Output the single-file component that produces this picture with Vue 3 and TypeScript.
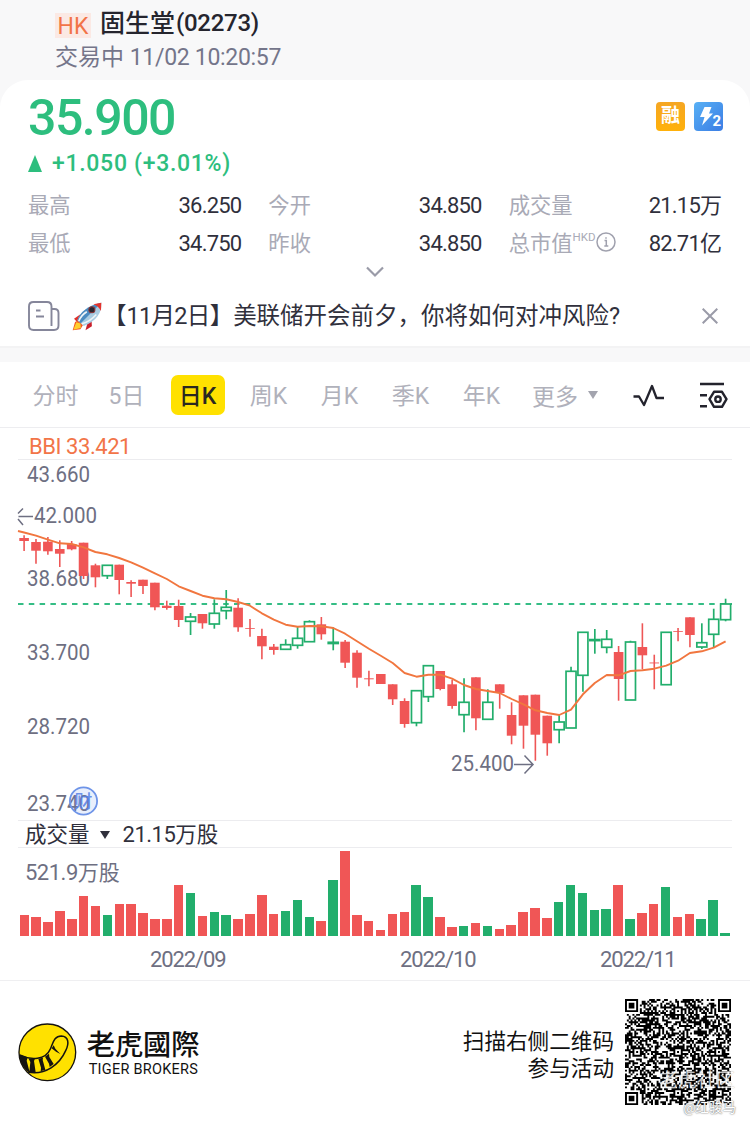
<template>
  <div class="page">
    <header class="head">
      <div class="head-title">
        <span class="market">HK</span>
        <span class="name">固生堂<span class="code">(02273)</span></span>
      </div>
      <div class="head-status">交易中 <span class="time">11/02 10:20:57</span></div>
    </header>

    <section class="quote">
      <div class="quote-top">
        <div class="price">35.900</div>
        <div class="badges">
          <span class="badge badge-margin">融</span>
          <span class="badge badge-level">
            <svg viewBox="0 0 29 29">
              <path d="M10.500 5h7l-2.500 6.500h4L8 23.500l2.500-8.500H6z" fill="#fff" />
            </svg>
            <b>2</b>
          </span>
        </div>
      </div>
      <div class="change">
        <i class="up"></i>
        <span>+1.050 (+3.01%)</span>
      </div>
      <div class="stats">
        <div v-for="s in stats" :key="s.label" class="stat">
          <span class="stat-label">{{ s.label }}<sup v-if="s.info">HKD</sup>
            <svg v-if="s.info" class="info" viewBox="0 0 20 20" fill="none" stroke="#a0a1ae" stroke-width="1.500">
              <circle cx="10" cy="10" r="9" />
              <path d="M8.500 8.500H10.300V14M8.300 14h4M10 5.200v1.500" />
            </svg>
          </span>
          <span class="stat-value">{{ s.value }}<em v-if="s.unit">{{ s.unit }}</em></span>
        </div>
      </div>
      <svg class="more" viewBox="0 0 18 12" fill="none" stroke="#9a9ba8" stroke-width="2.200">
        <path d="M1 1.500l8 8 8-8" />
      </svg>
      <div class="news">
        <svg class="news-icon" viewBox="0 0 32 30" fill="none" stroke="#85869a" stroke-width="1.900">
          <path d="M23.500 25V5.500Q23.500 1 19 1H5.500Q1 1 1 5.500v19Q1 29 5.500 29H26q4.500 0 4.500-4.500V12q0-4-4-4h-3M23.500 8v15.500" />
          <path d="M8 9.500h4.500M8 15.500h8" />
        </svg>
        <svg class="rocket" viewBox="0 0 92 86">
          <path d="M6 50l18-13 20 5-26 20z" fill="#e0302b" />
          <path d="M40 84l6-22 12-10 1 20z" fill="#c91f2b" />
          <path d="M2 84l7-25 14-6 11 13-9 15z" fill="#f25a24" />
          <path d="M4 82l9-22 12 4 1 13z" fill="#ffcf2e" />
          <path d="M16 54Q29 15 87 2q3 47-52 69z" fill="#a9cce2" />
          <path d="M16 54Q29 15 87 2L26 63z" fill="#4a8bc0" />
          <path d="M63 7l24-5-1 25Q79 12 63 7z" fill="#e3342d" />
          <circle cx="59" cy="23" r="9" fill="#26262e" stroke="#8c3436" stroke-width="3" />
          <path d="M20 57q8-19 24-28M29 65q26-8 43-28" stroke="#eef4f7" stroke-width="5" fill="none" />
        </svg>
        <span class="news-text">【<span class="date">11月2日</span>】<span class="news-main">美联储开会前夕，你将如何对冲风险?</span></span>
        <svg class="close" viewBox="0 0 16 16" fill="none" stroke="#9a9ba8" stroke-width="2">
          <path d="M.7.700l14.600 14.600M15.300.700L.7 15.300" />
        </svg>
      </div>
    </section>

    <nav class="tabs">
      <div v-for="t in tabs" :key="t" class="tab" :class="{ active: t === current }" @click="current = t">
        <span>{{ t }}</span>
      </div>
      <div class="tab-more">更多<i></i></div>
      <svg class="wave" viewBox="0 0 32 24" fill="none" stroke="#23232d" stroke-width="2.300" stroke-linejoin="round">
        <path d="M.5 12.500H6l5 8.500 8-19 4.500 12H31" />
      </svg>
      <svg class="setting" viewBox="0 0 30 28" fill="none" stroke="#23232d" stroke-width="2.400">
        <path d="M1 2h24M1 13.300h7M1 24.300h7" />
        <path d="M15 9.800h8l4.500 7.400-4.500 7.600h-8l-4.500-7.600z" stroke-linejoin="round" />
        <circle cx="19" cy="17.200" r="2.700" />
      </svg>
    </nav>

    <div class="bbi">BBI 33.421</div>

    <svg class="chart" width="750" height="361" viewBox="0 459 750 361">
      <line x1="18" x2="732" y1="459.500" y2="459.500" class="grid" />
      <g class="axis">
        <text v-for="l in priceLabels" :key="l.text" x="27" :y="l.y" textLength="63" lengthAdjust="spacingAndGlyphs">{{ l.text }}</text>
        <text x="34" y="522.500" textLength="63" lengthAdjust="spacingAndGlyphs">42.000</text>
        <text x="451" y="771" textLength="63" lengthAdjust="spacingAndGlyphs">25.400</text>
      </g>
      <path d="M33 516.500H18.500M23 508.500l-5 5M18 519l5 6" class="arrow" />
      <path d="M514 764.500h19M524.500 755.500l8.500 9-8.500 9" class="arrow" />
      <line x1="18" x2="732" y1="603.900" y2="603.900" class="last-price" />
      <g v-for="c in candles" :key="c.x" :class="c.up ? 'rise' : 'fall'">
        <template v-if="c.up">
          <line :x1="c.x" :x2="c.x" :y1="c.high" :y2="c.top" />
          <line :x1="c.x" :x2="c.x" :y1="c.bottom" :y2="c.low" />
          <rect :x="c.x - 5" :y="c.top" width="10" :height="c.bottom - c.top" />
        </template>
        <template v-else>
          <line :x1="c.x" :x2="c.x" :y1="c.high" :y2="c.low" />
          <rect :x="c.x - 4.800" :y="c.top" width="9.600" :height="c.bottom - c.top" />
        </template>
      </g>
      <polyline :points="bbiLine" class="bbi-line" />
      <g class="event">
        <circle cx="83.500" cy="801" r="13.600" />
        <text x="83.500" y="808" text-anchor="middle">财</text>
      </g>
    </svg>

    <div class="vol-head">
      <span>成交量</span>
      <i></i>
      <span><b>21.15</b>万股</span>
    </div>
    <div class="vol">
      <div class="vol-max"><b>521.9</b>万股</div>
      <div class="bars">
        <i v-for="c in candles" :key="c.x" :class="c.up ? 'bar-up' : 'bar-down'" :style="{ height: c.volume + 'px' }"></i>
      </div>
    </div>
    <div class="months">
      <span>2022/09</span>
      <span>2022/10</span>
      <span>2022/11</span>
    </div>

    <footer class="foot">
      <svg class="logo" viewBox="53 67 176 176">
        <circle cx="141" cy="155" r="85" fill="#ffe100" stroke="#151310" stroke-width="4" />
        <path d="M58 163C92 180 136 178 150 145C159 124 162 106 183 106C205 107 207 128 196 150C178 191 135 225 82 214" fill="none" stroke="#151310" stroke-width="4.500" />
        <path d="M58 162l24 8-3 10 9 35-8-3Q62 192 57 171zM84 173l20 1-3 7 5 34-19-1 3-30zM114 174l14-3-1 7 8 29-14 5 1-11zM134 168l12-9 1 10 13 21-12 9-2-10zM154 143l6-9 5 10 15 16-13-7z" fill="#151310" />
      </svg>
      <div class="brand">
        <div class="brand-cn">老虎國際</div>
        <div class="brand-en">TIGER BROKERS</div>
      </div>
      <div class="tip">扫描右侧二维码<br>参与活动</div>
      <div class="qr">
        <svg viewBox="0 0 57 57">
          <path :d="qrPath" fill="#000" />
        </svg>
        <span class="mark-community">老虎社区</span>
        <span class="mark-user">@红骏马</span>
      </div>
    </footer>
  </div>
</template>

<script setup lang="ts">
import { ref } from 'vue'

interface Stat {
  label: string
  value: string
  unit?: string
  info?: boolean
}

interface Candle {
  x: number
  up: boolean
  top: number
  bottom: number
  high: number
  low: number
  volume: number
}

const stats: Stat[] = [
  { label: '最高', value: '36.250' },
  { label: '今开', value: '34.850' },
  { label: '成交量', value: '21.15', unit: '万' },
  { label: '最低', value: '34.750' },
  { label: '昨收', value: '34.850' },
  { label: '总市值', value: '82.71', unit: '亿', info: true },
]

const tabs = ['分时', '5日', '日K', '周K', '月K', '季K', '年K']
const current = ref('日K')

const priceLabels = [
  { text: '43.660', y: 482 },
  { text: '38.680', y: 586 },
  { text: '33.700', y: 660 },
  { text: '28.720', y: 734 },
  { text: '23.740', y: 811 },
]

// [up, top, bottom, high, low, volume]
const raw: number[][] = [
  [0, 538, 541, 535.3, 551, 20.7],
  [0, 542, 550.7, 539, 563.7, 19.3],
  [0, 541.7, 551.3, 537, 554.7, 14.3],
  [0, 549, 553.7, 540.3, 567, 24.7],
  [0, 544, 549.3, 541, 550.3, 17],
  [0, 542.7, 576, 542.7, 579, 40],
  [0, 565.3, 577.3, 563.7, 587.3, 30],
  [1, 565.3, 575.7, 565.3, 579, 20.7],
  [0, 564.7, 580, 564.7, 594.3, 32.3],
  [0, 582, 583.7, 580.3, 597, 32.3],
  [0, 579.7, 586, 579.7, 594, 23.3],
  [0, 582.7, 607.3, 582.7, 610.3, 17],
  [0, 605.7, 608, 600.7, 609.7, 17],
  [0, 606, 620, 599.7, 627, 50.7],
  [1, 617, 621.3, 613, 635, 42.7],
  [0, 614, 623.3, 614, 628.7, 20.3],
  [1, 613.3, 624, 599.3, 628.7, 23.7],
  [1, 607.3, 610.7, 590, 619.3, 20.7],
  [0, 607.7, 627.3, 598.3, 631.7, 17.3],
  [0, 628, 628.8, 619, 636.7, 22],
  [0, 636, 646.3, 628.7, 659.3, 41.3],
  [0, 646.7, 650, 644, 654.7, 22.3],
  [1, 644.7, 649.3, 639.3, 650, 24.7],
  [1, 638.3, 645.3, 626.7, 648.7, 36.3],
  [1, 621.7, 641.7, 620.3, 641.7, 19],
  [0, 624.3, 634.3, 617, 639.7, 15],
  [1, 642.3, 643.5, 627.3, 650.3, 55.7],
  [0, 641.7, 662.7, 640, 668, 84.7],
  [0, 652.7, 677.7, 650.3, 687.7, 21],
  [0, 678.3, 679.3, 670.7, 686.3, 14.7],
  [0, 674, 684, 674, 684, 6.5],
  [0, 684.3, 699.3, 684.3, 705, 21.7],
  [0, 701, 724, 698.3, 727.7, 24.3],
  [1, 690.7, 722.7, 690.7, 726.3, 50.7],
  [1, 665.7, 696.7, 665.7, 702, 39],
  [0, 671, 689, 671, 690.3, 19.3],
  [0, 684.3, 706, 679.7, 708.7, 9.3],
  [1, 702.3, 714.7, 678.3, 732.3, 10.3],
  [0, 677.3, 718.3, 677.3, 730.3, 13.3],
  [1, 702.3, 719.3, 689.3, 719.3, 10],
  [0, 684.3, 693, 684.3, 708.7, 6.7],
  [0, 715, 735.7, 702.3, 744.3, 11.3],
  [0, 695.3, 725.7, 695.3, 748.7, 24.3],
  [0, 694.7, 734.7, 694.7, 760.7, 27.7],
  [0, 715.7, 743.3, 715.7, 755.7, 18.3],
  [1, 722, 729.7, 714.7, 743.3, 33.7],
  [1, 671.3, 728, 666.7, 728, 51.3],
  [1, 632.3, 675.3, 632.3, 691.7, 43.3],
  [1, 639.6, 640.6, 629, 653.7, 25.7],
  [1, 639.3, 647.3, 630, 653.3, 27],
  [0, 652, 679, 646, 700.7, 51.3],
  [1, 642, 700, 640.7, 700, 17.3],
  [0, 647, 655.3, 623.3, 669.3, 22.7],
  [0, 662.5, 663.4, 654.7, 689.3, 31.7],
  [1, 632.3, 684.7, 632.3, 684.7, 49],
  [0, 631, 631.8, 628, 641.3, 19.3],
  [0, 617.3, 635, 617.3, 647.3, 22],
  [1, 642.7, 647, 623.3, 649, 17.3],
  [1, 619.3, 634.3, 608.7, 648, 36],
  [1, 604, 619.7, 598.7, 621.3, 2.7],
]

const step = 11.89
const candles: Candle[] = raw.map(([up, top, bottom, high, low, volume], i) => ({
  x: +(24.1 + i * step).toFixed(2),
  up: up === 1,
  top,
  bottom,
  high,
  low,
  volume,
}))

const bbi = [
  532.5, 535.7, 539.7, 543.3, 544, 547.3, 552, 554.3, 558, 562.3, 567.7, 573.3, 579, 586.3, 591,
  595.7, 598.3, 599.3, 602, 605.7, 613.3, 619.7, 624.7, 626.7, 626, 626.3, 628, 633.7, 641.3, 648.7,
  655.7, 663, 673, 676.7, 674.7, 674.7, 678.7, 685, 689, 691, 693, 699, 704.3, 710.3, 713,
  715, 709.7, 694.3, 683, 675, 675.3, 671, 670.3, 668.7, 665.7, 660.7, 653, 651.3, 647.7, 641.3,
]
const bbiLine = '18,531 ' + bbi.map((y, i) => `${(24.1 + i * step).toFixed(1)},${y}`).join(' ')

// 57x57 二维码
const N = 57

function ring(x: number, y: number, cx: number, cy: number) {
  return Math.max(Math.abs(x - cx), Math.abs(y - cy))
}

function buildQr(): string {
  let seed = 20221102
  let d = ''
  const finders = [[3, 3], [N - 4, 3], [3, N - 4]]
  const aligns = [[28, 6], [6, 28], [28, 28], [50, 28], [28, 50], [50, 50]]
  for (let y = 0; y < N; y++) {
    for (let x = 0; x < N; x++) {
      seed = (Math.imul(seed, 1664525) + 1013904223) >>> 0
      let on = (seed >>> 16) % 100 < 54
      if (x === 6 || y === 6) on = (x + y) % 2 === 0
      for (const [cx, cy] of aligns) {
        const r = ring(x, y, cx, cy)
        if (r <= 2) on = r !== 1
      }
      for (const [cx, cy] of finders) {
        const r = ring(x, y, cx, cy)
        if (r <= 4) on = r !== 2 && r !== 4
      }
      if (on) d += `M${x} ${y}h1.050v1.050h-1.050z`
    }
  }
  return d
}

const qrPath = buildQr()
</script>

<style>
body {
  background: #fff;
}
</style>

<style scoped>
.page {
  width: 750px;
  height: 1125px;
  overflow: hidden;
  background: #f8f8f9;
  font-family: Roboto, 'Noto Sans CJK SC', sans-serif;
  color: #30303c;
  display: flex;
  flex-direction: column;
}

.page > * {
  flex-shrink: 0;
}

svg {
  display: block;
}

.head {
  height: 80px;
  padding: 7px 0 0 55px;
  box-sizing: border-box;
}

.head-title {
  display: flex;
  align-items: center;
  height: 34px;
}

.market {
  width: 36px;
  height: 25px;
  line-height: 27px;
  margin: 2px 9px 0 0;
  background: #fbe9e4;
  color: #f27448;
  font-size: 23px;
  text-align: center;
}

.name {
  display: flex;
  font-size: 25px;
  line-height: 34px;
  font-weight: 500;
  color: #25252e;
}

.code {
  font-size: 24px;
  line-height: 33px;
  letter-spacing: -0.3px;
  margin-left: 1px;
}

.head-status {
  height: 34px;
  line-height: 34px;
  font-size: 23px;
  color: #74758a;
  white-space: pre;
}

.time {
  letter-spacing: -0.3px;
}

.quote {
  height: 268px;
  box-sizing: border-box;
  border-bottom: 2px solid #f3f3f4;
  border-radius: 28px 28px 0 0;
  background: #fff;
  padding: 8px 28px 0;
}

.quote-top {
  display: flex;
  justify-content: space-between;
  height: 60px;
}

.price {
  font-size: 50px;
  line-height: 61px;
  font-weight: 500;
  letter-spacing: -1.5px;
  color: #2dbe7e;
}

.badges {
  display: flex;
  gap: 9px;
  margin: 14px -1px 0 0;
}

.badge {
  width: 29px;
  height: 29px;
  border-radius: 4px;
  color: #fff;
  position: relative;
}

.badge-margin {
  background: linear-gradient(#f5a623, #ffb10a);
  font-size: 19px;
  font-weight: 700;
  line-height: 28px;
  text-align: center;
}

.badge-level {
  background: linear-gradient(135deg, #58b0f5, #3b7de4);
}

.badge-level b {
  position: absolute;
  right: 2px;
  bottom: 1px;
  font-size: 15px;
  line-height: 17px;
}

.change {
  display: flex;
  align-items: center;
  height: 30px;
  font-size: 23px;
  font-weight: 500;
  letter-spacing: 0.7px;
  color: #2dbe7e;
}

.up {
  border: 7.500px solid transparent;
  border-top: 0;
  border-bottom: 17px solid #2dbe7e;
  margin-right: 10px;
}

.stats {
  display: grid;
  grid-template-columns: repeat(3, 1fr);
  grid-auto-rows: 38px;
  column-gap: 27px;
  margin-top: 9px;
}

.stat {
  display: flex;
  justify-content: space-between;
  align-items: center;
}

.stat-label {
  display: flex;
  align-items: center;
  font-size: 21.300px;
  line-height: 38px;
  color: #a9aab6;
}

.stat-label sup {
  font-size: 11.500px;
  line-height: 12px;
  margin-bottom: 14px;
}

.info {
  width: 20px;
  height: 20px;
  margin-bottom: 4px;
}

.stat-value {
  font-size: 22px;
  line-height: 38px;
  letter-spacing: -0.8px;
}

.stat-value em {
  font-style: normal;
  letter-spacing: 0;
}

.more {
  width: 18px;
  height: 12px;
  margin: 3px auto 0;
}

.news {
  display: flex;
  align-items: center;
  height: 38px;
  margin-top: 19px;
}

.news-icon {
  width: 32px;
  height: 30px;
}

.rocket {
  width: 31px;
  height: 29px;
  margin-left: 12px;
}

.news-text {
  flex: 1;
  font-size: 23.500px;
  line-height: 36px;
  margin-bottom: 1px;
  white-space: nowrap;
}

.date {
  letter-spacing: -0.7px;
}

.close {
  width: 16px;
  height: 16px;
  margin-right: 4px;
}

.tabs {
  margin-top: 14px;
  height: 66px;
  box-sizing: border-box;
  border-bottom: 1px solid #ededf0;
  padding-left: 20px;
  background: #fff;
  display: flex;
  align-items: center;
  font-size: 23px;
  color: #b0b1bb;
}

.tab {
  width: 71px;
  display: flex;
  justify-content: center;
}

.tab span {
  height: 40px;
  line-height: 43px;
}

.tab.active span {
  width: 54px;
  text-align: center;
  border-radius: 7px;
  background: #ffe100;
  color: #2b2820;
  font-weight: 500;
}

.tab-more {
  display: flex;
  align-items: center;
  margin-left: 15px;
  width: 101px;
}

.tab-more i {
  border: 5px solid transparent;
  border-bottom: 0;
  border-top: 8px solid #a3a4ae;
  margin-left: 10px;
}

.wave {
  width: 32px;
  height: 24px;
  margin-top: 2px;
}

.setting {
  width: 30px;
  height: 28px;
  margin: 3px 0 0 34px;
}

.bbi {
  height: 31px;
  padding: 3px 0 0 29px;
  box-sizing: border-box;
  background: #fff;
  font-size: 22px;
  line-height: 31px;
  letter-spacing: -0.45px;
  color: #f27448;
}

.chart {
  background: #fff;
}

.grid {
  stroke: #ececef;
}

.axis text {
  font-size: 22px;
  fill: #6e6f82;
}

.arrow {
  fill: none;
  stroke: #6e6f82;
  stroke-width: 1.500;
}

.last-price {
  stroke: #35bd85;
  stroke-width: 2;
  stroke-dasharray: 5.500 5.300;
}

.rise line,
.rise rect {
  stroke: #22ae6c;
  stroke-width: 1.700;
  fill: #fff;
}

.fall line {
  stroke: #ee5656;
  stroke-width: 1.600;
}

.fall rect {
  fill: #f05656;
}

.bbi-line {
  fill: none;
  stroke: #f1763f;
  stroke-width: 1.900;
  stroke-linejoin: round;
}

.event circle {
  fill: #6e94e8;
  fill-opacity: 0.15;
  stroke: #6e94e8;
  stroke-width: 1.800;
}

.event text {
  font-size: 18px;
  font-weight: 500;
  fill: #5580e6;
  fill-opacity: 0.85;
}

.vol-head {
  height: 28px;
  padding-left: 25px;
  box-sizing: border-box;
  background:
    linear-gradient(#ececef, #ececef) 18px 0 / 714px 1px no-repeat,
    linear-gradient(#ececef, #ececef) 18px 27px / 714px 1px no-repeat,
    #fff;
  display: flex;
  align-items: center;
  font-size: 21.500px;
  line-height: 28px;
  padding-top: 1px;
}

.vol-head i {
  border: 5px solid transparent;
  border-bottom: 0;
  border-top: 8px solid #30303c;
  margin: 0 13px 0 10px;
}

.vol-head b,
.vol-max b {
  font-weight: 400;
  font-size: 22px;
  letter-spacing: -0.5px;
}

.vol {
  height: 88px;
  background: #fff;
  padding-left: 19.500px;
  position: relative;
  display: flex;
  align-items: flex-end;
}

.vol-max {
  position: absolute;
  left: 25px;
  top: 9px;
  font-size: 21px;
  line-height: 32px;
  color: #6e6f82;
}

.bars {
  display: flex;
  align-items: flex-end;
  gap: 2.290px;
}

.bars i {
  width: 9.600px;
}

.bar-up {
  background: #22ae6c;
}

.bar-down {
  background: #f05656;
}

.months {
  height: 44px;
  background: #fff;
  display: flex;
  padding-left: 150px;
  font-size: 22px;
  line-height: 47px;
  letter-spacing: -1.1px;
  color: #6e6f82;
}

.months span {
  flex: none;
  width: 250px;
}

.months span:nth-child(2) {
  width: 200px;
}

.foot {
  flex: 1;
  box-sizing: border-box;
  border-top: 1px solid #efeff1;
  background: #fff;
  display: flex;
  align-items: flex-start;
  padding: 18px 19px 0 18px;
  color: #111;
}

.logo {
  width: 58.700px;
  height: 58.700px;
  margin-top: 24px;
}

.brand {
  margin: 25px 0 0 10px;
  flex: 1;
}

.brand-cn {
  font-family: 'Noto Sans CJK TC', sans-serif;
  font-size: 28.200px;
  font-weight: 500;
  line-height: 38px;
}

.brand-en {
  font-size: 14.500px;
  line-height: 15px;
  margin-left: 2px;
  letter-spacing: 0.25px;
}

.tip {
  font-size: 21.600px;
  line-height: 27px;
  margin: 29px 11px 0 0;
  text-align: right;
}

.qr {
  width: 106px;
  height: 106px;
  position: relative;
}

.mark-community,
.mark-user {
  position: absolute;
  white-space: nowrap;
  color: #fff;
}

.mark-community {
  right: -4px;
  bottom: 11px;
  font-size: 19px;
  line-height: 26px;
  opacity: 0.75;
  text-shadow: 0 0 1px #777;
}

.mark-user {
  right: -5px;
  bottom: -11px;
  font-size: 13.500px;
  line-height: 18px;
  text-shadow: 0 0 2px #777, 0 0 1px #777;
}
</style>
